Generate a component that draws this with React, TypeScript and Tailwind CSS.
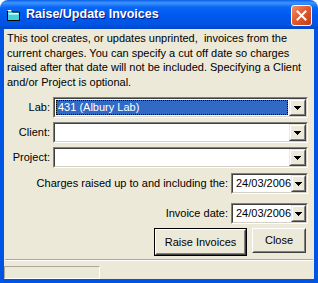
import React from 'react';

const Arrow = () => (
  <svg width="7" height="4" viewBox="0 0 7 4" className="block">
    <path d="M0 0h7v1H0zM1 1h5v1H1zM2 2h3v1H2zM3 3h1v1H3z" fill="#000" />
  </svg>
);

const DropButton = () => (
  <div className="w-[17px] h-full border border-t-[#ECE9D8] border-l-[#ECE9D8] border-b-[#404040] border-r-[#404040]">
    <div className="h-full bg-[#ECE9D8] border border-t-white border-l-white border-b-[#808080] border-r-[#808080] flex items-center justify-center">
      <Arrow />
    </div>
  </div>
);

const Sunken = ({ className, children }: { className?: string; children?: React.ReactNode }) => (
  <div className={`border border-t-[#808080] border-l-[#808080] border-b-white border-r-white ${className ?? ''}`}>
    <div className="h-full border border-t-[#404040] border-l-[#404040] border-b-[#D4D0C8] border-r-[#D4D0C8] bg-white flex">
      {children}
    </div>
  </div>
);

const Combo = ({ value, selected }: { value?: string; selected?: boolean }) => (
  <Sunken className="flex-1 h-[21px]">
    <div className="flex-1 p-[1px]">
      {selected ? (
        <div className="h-full bg-[#316AC5] text-white border border-dotted border-black px-[1px] leading-[13px]">{value}</div>
      ) : (
        <div className="h-full px-[2px] leading-[15px]">{value}</div>
      )}
    </div>
    <DropButton />
  </Sunken>
);

const DateBox = ({ value }: { value: string }) => (
  <Sunken className="w-[77px] h-[21px]">
    <div className="flex-1 pl-[3px] leading-[17px]">{value}</div>
    <DropButton />
  </Sunken>
);

const FieldRow = ({ label, children }: { label: string; children: React.ReactNode }) => (
  <div className="flex items-center">
    <div className="w-[49px] text-right pr-[3px]">{label}</div>
    {children}
  </div>
);

export default function App() {
  return (
    <div className="w-[318px] h-[283px] flex flex-col font-['Liberation_Sans',Arial,sans-serif] text-[11px] text-black">
      <div className="h-[29px] shrink-0 rounded-t-[8px] bg-[linear-gradient(to_bottom,#0A5FE8_0%,#3D95FF_10%,#0866F4_25%,#0058EE_55%,#0054E3_85%,#0046C8_100%)] flex items-center pl-[6px] pr-[6px]">
        <svg width="15" height="14" viewBox="0 0 15 14" className="shrink-0">
          <path d="M1.5 2.5h4l1 1.5h7v8.5h-12z" fill="#3FD3D8" stroke="#000" />
          <path d="M2.5 5h10v1.5h-10z" fill="#fff" />
          <path d="M1.5 2.5h4" stroke="#fff" />
        </svg>
        <div className="ml-[5px] flex-1 text-white font-bold text-[12.5px] [text-shadow:1px_1px_#0A1883]">
          Raise/Update Invoices
        </div>
        <div className="w-[21px] h-[21px] rounded-[3px] border border-white bg-[linear-gradient(135deg,#F0906C_0%,#E25A30_45%,#C13C16_100%)] flex items-center justify-center mt-[2px]">
          <svg width="11" height="11" viewBox="0 0 11 11">
            <path d="M1.5 1.5l8 8M9.5 1.5l-8 8" stroke="#fff" strokeWidth="2" strokeLinecap="square" />
          </svg>
        </div>
      </div>

      <div className="flex-1 flex flex-col bg-[#ECE9D8] border-x-[4px] border-b-[4px] border-[#0054E3]">
        <p className="px-[3px] pt-[2px] leading-[14.5px]">
          This tool creates, or updates unprinted,&nbsp; invoices from the current charges. You can specify a cut off date so charges raised after that date will not be included. Specifying a Client and/or Project is optional.
        </p>

        <div className="pr-[6px] mt-[8px] flex flex-col gap-[4px]">
          <FieldRow label="Lab:">
            <Combo value="431 (Albury Lab)" selected />
          </FieldRow>
          <FieldRow label="Client:">
            <Combo />
          </FieldRow>
          <FieldRow label="Project:">
            <Combo />
          </FieldRow>
        </div>

        <div className="pr-[6px] mt-[5px] flex flex-col gap-[9px]">
          <div className="flex items-center justify-end">
            <span className="pr-[3px]">Charges raised up to and including the:</span>
            <DateBox value="24/03/2006" />
          </div>
          <div className="flex items-center justify-end">
            <span className="pr-[3px]">Invoice date:</span>
            <DateBox value="24/03/2006" />
          </div>
        </div>

        <div className="mt-[4px] pr-[8px] flex justify-end items-start gap-[5px]">
          <button className="w-[93px] h-[28px] border border-black bg-[#ECE9D8]">
            <div className="h-full border border-t-white border-l-white border-b-[#404040] border-r-[#404040]">
              <div className="h-full border border-t-[#ECE9D8] border-l-[#ECE9D8] border-b-[#808080] border-r-[#808080] flex items-center justify-center">
                Raise Invoices
              </div>
            </div>
          </button>
          <button className="w-[54px] h-[25px] bg-[#ECE9D8] border border-t-white border-l-white border-b-[#404040] border-r-[#404040]">
            <div className="h-full border border-t-[#ECE9D8] border-l-[#ECE9D8] border-b-[#808080] border-r-[#808080] flex items-center justify-center">
              Close
            </div>
          </button>
        </div>

        <div className="mt-auto">
          <div className="mx-[1px] border-t border-t-[#ACA899] border-b border-b-white" />
          <div className="mt-[5px] w-[96px] h-[13px] border border-t-[#ACA899] border-l-[#ACA899] border-b-white border-r-white" />
        </div>
      </div>
    </div>
  );
}
